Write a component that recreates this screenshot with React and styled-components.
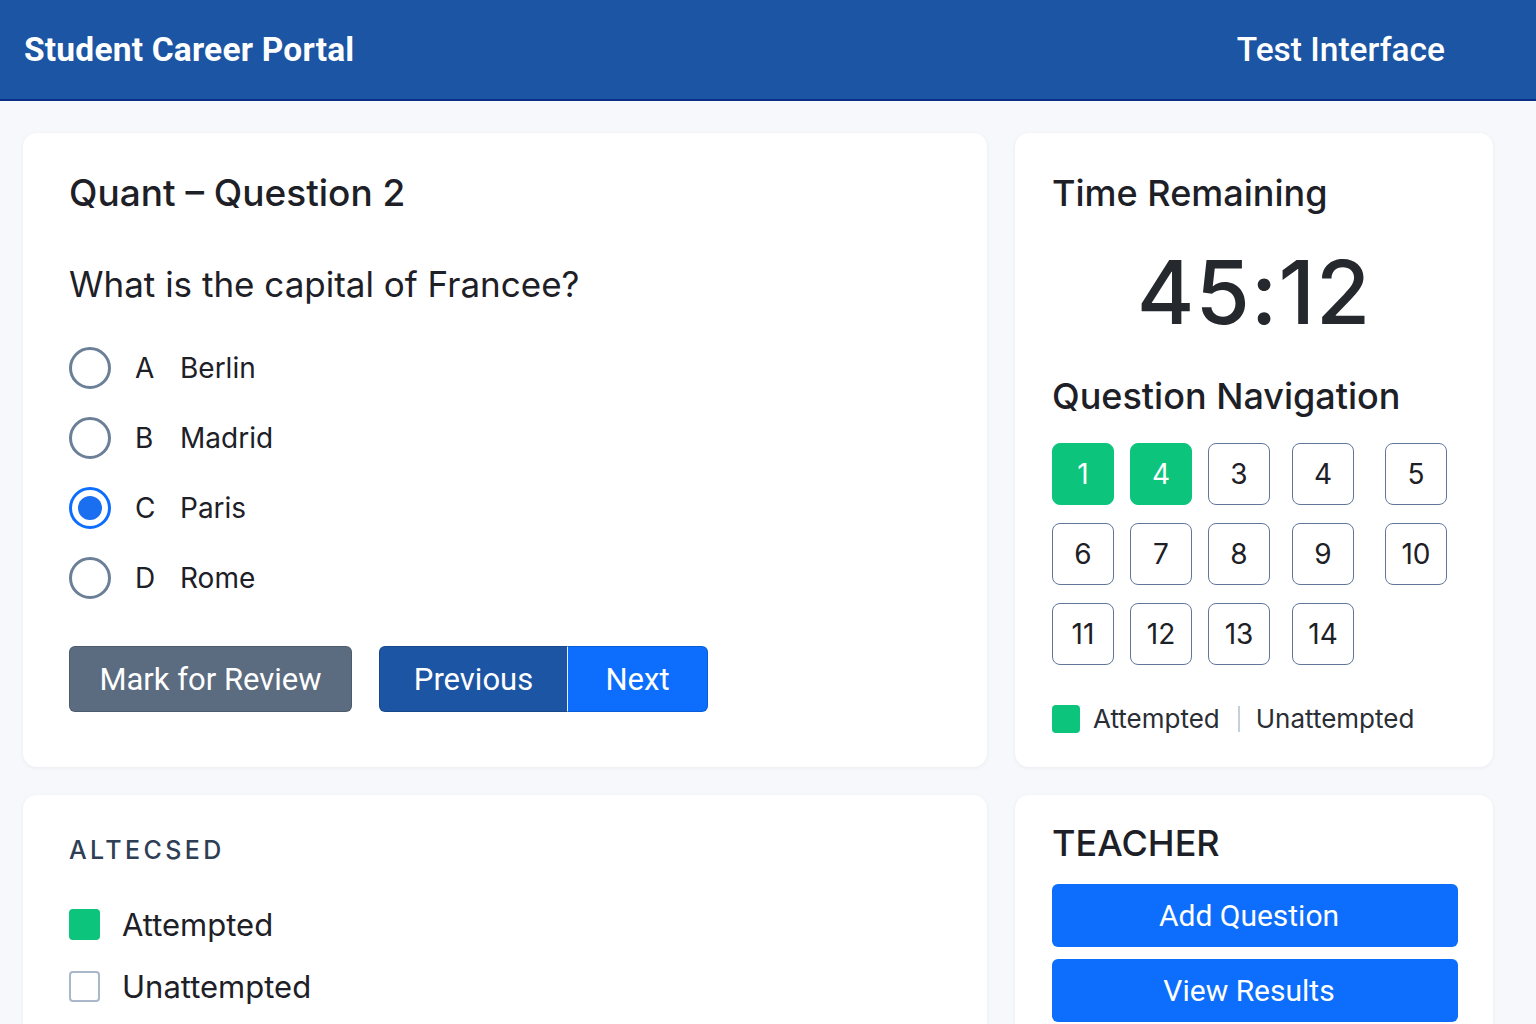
import React from 'react';
import styled, {createGlobalStyle, css} from 'styled-components';

const GlobalStyle = createGlobalStyle`
    body {
        margin: 0;
        background: #f6f8fb;
        font-family: Inter, "Noto Sans", sans-serif;
        color: #1d2026;
    }
`

const Header = styled.header`
    height: 99px;
    border-bottom: 2px solid #0b2f86;
    background: #1b55a3;
    display: flex;
    align-items: center;
    justify-content: space-between;
    padding: 0 91px 0 24px;
    color: #fff;
`

const Brand = styled.div`
    font-family: Roboto, Inter, sans-serif;
    font-size: 33.5px;
    font-weight: 700;
    letter-spacing: 0.2px;
`

const HeaderRight = styled.div`
    font-family: Roboto, Inter, sans-serif;
    font-size: 33.5px;
    font-weight: 500;
`

const Main = styled.main`
    display: grid;
    grid-template-columns: 964px 478px;
    column-gap: 28px;
    row-gap: 28px;
    padding: 32px 0 0 23px;
`

const Card = styled.section`
    background: #fff;
    border-radius: 14px;
    box-shadow: 0 1px 4px rgba(30, 50, 90, 0.06);
    padding: ${props => props.pad || '38px 46px'};
    height: ${props => props.h || 'auto'};
    box-sizing: border-box;
`

const CardTitle = styled.h2`
    margin: 0;
    font-size: 36px;
    line-height: 44px;
    font-weight: 500;
    color: #1d2026;
`

const QTitle = styled(CardTitle)`
    font-size: 37px;
`

const QuestionText = styled.div`
    margin-top: 47px;
    font-size: 35px;
    line-height: 44px;
    font-weight: 400;
`

const Options = styled.div`
    margin-top: 41px;
    display: flex;
    flex-direction: column;
    gap: 28px;
`

const Option = styled.label`
    display: flex;
    align-items: center;
    height: 42px;
    font-size: 28px;
`

const Radio = styled.span`
    width: 42px;
    height: 42px;
    box-sizing: border-box;
    border-radius: 50%;
    border: 3px solid #6b7f96;
    display: flex;
    align-items: center;
    justify-content: center;
    ${props => props.checked && css`
        border-color: #0d6efd;
        &::after {
            content: '';
            width: 24px;
            height: 24px;
            border-radius: 50%;
            background: #1a6ff0;
        }
    `}
`

const Letter = styled.span`
    width: 45px;
    margin-left: 24px;
`

const Buttons = styled.div`
    margin-top: 47px;
    display: flex;
    gap: 27px;
`

const Btn = styled.button`
    height: 66px;
    border-radius: 6px;
    border: 1px solid rgba(0, 0, 0, 0.15);
    color: #fff;
    font-family: Roboto, Inter, sans-serif;
    font-size: 31px;
    padding: 0;
    background: ${props => props.bg};
    width: ${props => props.w}px;
`

const Split = styled.div`
    display: flex;
    ${Btn}:first-child {
        border-radius: 6px 0 0 6px;
        border-right: 1px solid #e6eefc;
    }
    ${Btn}:last-child {
        border-radius: 0 6px 6px 0;
        border-left: none;
    }
`

const Timer = styled.div`
    margin-top: 27px;
    text-align: center;
    font-size: 88px;
    line-height: 100px;
    font-weight: 500;
    color: #25282d;
    letter-spacing: 1px;
`

const NavTitle = styled(CardTitle)`
    margin-top: 32px;
`

const NavGrid = styled.div`
    margin-top: 25px;
    display: grid;
    grid-template-columns: 78px 78px 84px 93px 62px;
    row-gap: 18px;
`

const NavBox = styled.div`
    width: 62px;
    height: 62px;
    box-sizing: border-box;
    border-radius: 8px;
    border: 1.5px solid #61779a;
    display: flex;
    align-items: center;
    justify-content: center;
    font-size: 28px;
    color: #1d2026;
    ${props => props.done && css`
        background: #0cc47c;
        border-color: #0cc47c;
        color: #fff;
    `}
`

const Legend = styled.div`
    margin-top: 38px;
    display: flex;
    align-items: center;
    font-size: 26px;
    color: #2a2e35;
`

const Swatch = styled.span`
    width: ${props => props.size}px;
    height: ${props => props.size}px;
    box-sizing: border-box;
    border-radius: 4px;
    background: ${props => props.filled ? '#0cc47c' : '#fff'};
    border: 2px solid ${props => props.filled ? '#0cc47c' : '#a9b7c9'};
    flex-shrink: 0;
`

const Divider = styled.span`
    width: 2px;
    height: 26px;
    background: #c5d0de;
    margin: 0 16px 0 18px;
`

const Caps = styled.div`
    font-size: 25px;
    line-height: 30px;
    font-weight: 500;
    letter-spacing: 3.4px;
    color: #2d3e55;
`

const KeyList = styled.div`
    margin-top: 42px;
    display: flex;
    flex-direction: column;
    gap: 28px;
`

const KeyRow = styled.div`
    display: flex;
    align-items: center;
    gap: 22px;
    height: 34px;
    font-size: 31px;
`

const TeacherBtns = styled.div`
    margin-top: 19px;
    display: flex;
    flex-direction: column;
    gap: 12px;
`

const BlueBtn = styled.button`
    width: 406px;
    height: 63px;
    border: none;
    border-radius: 6px;
    background: #0d6efd;
    color: #fff;
    font-family: Roboto, Inter, sans-serif;
    font-size: 30px;
    padding: 0 12px 0 0;
`

const options = [
    {key: 'A', label: 'Berlin'},
    {key: 'B', label: 'Madrid'},
    {key: 'C', label: 'Paris', checked: true},
    {key: 'D', label: 'Rome'},
];

const navItems = [
    {n: 1, done: true}, {n: 4, done: true}, {n: 3}, {n: 4}, {n: 5},
    {n: 6}, {n: 7}, {n: 8}, {n: 9}, {n: 10},
    {n: 11}, {n: 12}, {n: 13}, {n: 14},
];

export default function App() {
    return (
        <>
            <GlobalStyle/>
            <Header>
                <Brand>Student Career Portal</Brand>
                <HeaderRight>Test Interface</HeaderRight>
            </Header>
            <Main>
                <Card h="634px">
                    <QTitle>Quant – Question 2</QTitle>
                    <QuestionText>What is the capital of Francee?</QuestionText>
                    <Options>
                        {options.map(o => (
                            <Option key={o.key}>
                                <Radio checked={o.checked}/>
                                <Letter>{o.key}</Letter>
                                {o.label}
                            </Option>
                        ))}
                    </Options>
                    <Buttons>
                        <Btn bg="#5b6b80" w={283}>Mark for Review</Btn>
                        <Split>
                            <Btn bg="#1b55a3" w={189}>Previous</Btn>
                            <Btn bg="#0d6efd" w={140}>Next</Btn>
                        </Split>
                    </Buttons>
                </Card>
                <Card h="634px" pad="38px 37px">
                    <CardTitle>Time Remaining</CardTitle>
                    <Timer>45:12</Timer>
                    <NavTitle>Question Navigation</NavTitle>
                    <NavGrid>
                        {navItems.map((q, i) => (
                            <NavBox key={i} done={q.done}>{q.n}</NavBox>
                        ))}
                    </NavGrid>
                    <Legend>
                        <Swatch size={28} filled/>
                        <span style={{marginLeft: 13}}>Attempted</span>
                        <Divider/>
                        <span>Unattempted</span>
                    </Legend>
                </Card>
                <Card h="260px" pad="40px 46px">
                    <Caps>ALTECSED</Caps>
                    <KeyList>
                        <KeyRow><Swatch size={31} filled/>Attempted</KeyRow>
                        <KeyRow><Swatch size={31}/>Unattempted</KeyRow>
                    </KeyList>
                </Card>
                <Card h="260px" pad="26px 37px">
                    <CardTitle>TEACHER</CardTitle>
                    <TeacherBtns>
                        <BlueBtn>Add Question</BlueBtn>
                        <BlueBtn>View Results</BlueBtn>
                    </TeacherBtns>
                </Card>
            </Main>
        </>
    );
}
